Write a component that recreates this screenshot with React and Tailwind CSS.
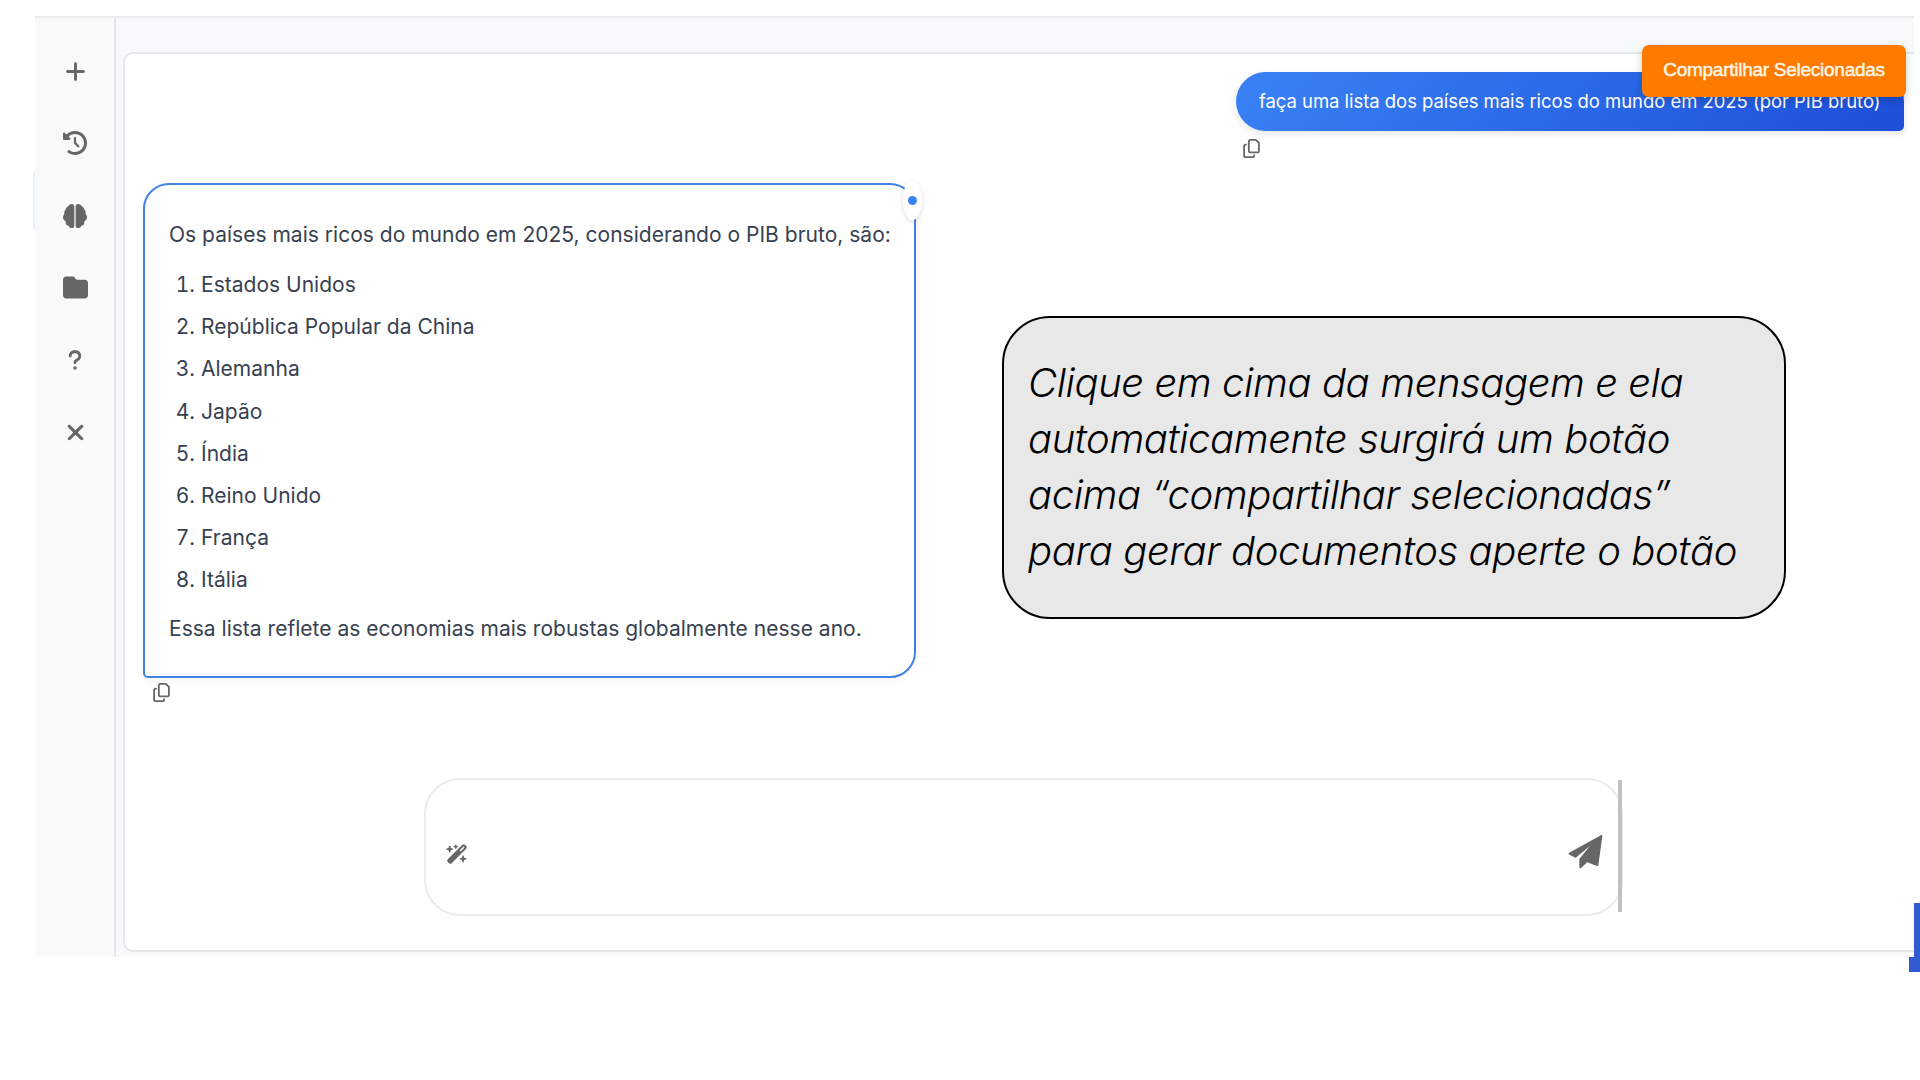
import React from "react";
import {
  FaPlus,
  FaClockRotateLeft,
  FaFolder,
  FaQuestion,
  FaXmark,
  FaRegCopy,
  FaWandMagicSparkles,
} from "react-icons/fa6";

const countries = [
  "Estados Unidos",
  "República Popular da China",
  "Alemanha",
  "Japão",
  "Índia",
  "Reino Unido",
  "França",
  "Itália",
];

const noteLines = [
  "Clique em cima da mensagem e ela",
  "automaticamente surgirá um botão",
  "acima “compartilhar selecionadas”",
  "para gerar documentos aperte o botão",
];

function BrainIcon() {
  return (
    <svg width="24" height="24" viewBox="0 0 72 72" fill="currentColor">
      <path d="M34 7v58c0 4-3 7-7 7-5 0-9-3-10-7-5 0-9-4-9-9v-4c-5-2-8-6-8-12 0-4 2-7 4-9-1-6 0-11 4-14 0-5 4-9 8-10 1-4 5-7 11-7 4 0 7 3 7 7z" />
      <path d="M38 7v58c0 4 3 7 7 7 5 0 9-3 10-7 5 0 9-4 9-9v-4c5-2 8-6 8-12 0-4-2-7-4-9 1-6 0-11-4-14 0-5-4-9-8-10-1-4-5-7-11-7-4 0-7 3-7 7z" />
    </svg>
  );
}

function SendIcon() {
  return (
    <svg className="-mt-[3px]" width="35" height="35" viewBox="0 0 105 105" fill="currentColor" stroke="currentColor" strokeWidth="6" strokeLinejoin="round">
      <path d="M100 6 L5 59 L22 68 L66 32 L70 36 L37 76 L37 100 L57 81 L88 93 Z" />
    </svg>
  );
}

function Sidebar() {
  return (
    <nav className="w-[81px] shrink-0 border-r-2 border-[#e5e7eb] bg-[#f9f9f9] text-[#666] flex flex-col items-center pt-[41px] pl-px gap-[48px]">
      <button className="h-6 flex items-center"><FaPlus size={23} /></button>
      <button className="h-6 flex items-center"><FaClockRotateLeft size={24} /></button>
      <button className="h-6 flex items-center pt-px"><BrainIcon /></button>
      <button className="h-6 flex items-center"><FaFolder size={25} /></button>
      <button className="h-6 flex items-center pt-[2px]"><FaQuestion size={22} /></button>
      <button className="h-6 flex items-center pt-[2px]"><FaXmark size={25} /></button>
    </nav>
  );
}

function UserMessage() {
  return (
    <div className="self-end w-[668px] mr-[10px]">
      <div className="h-[59px] rounded-[30px] rounded-br-[5px] bg-linear-135 from-[#3b82f6] to-[#1d4ed8] shadow-[0_3px_8px_rgba(0,0,0,0.1)] flex items-center pl-[23px] pt-px text-white text-[18.5px] tracking-[-0.045px] whitespace-nowrap">
        faça uma lista dos países mais ricos do mundo em 2025 (por PIB bruto)
      </div>
      <FaRegCopy size={19} className="mt-2 ml-[6px] text-[#666]" />
    </div>
  );
}

function AssistantMessage() {
  return (
    <div className="w-[773px] ml-[18px]">
      <div className="relative h-[495px] rounded-[26px] rounded-bl-[5px] border-2 border-[#4083e4] bg-white shadow-[0_3px_8px_rgba(0,0,0,0.05)] pl-6 pt-[33px] text-[21px] tracking-[0.015px] leading-[34px] text-[#374151] whitespace-nowrap">
        <p>Os países mais ricos do mundo em 2025, considerando o PIB bruto, são:</p>
        <ol className="mt-[12px] pl-[6px]">
          {countries.map((c, i) => (
            <li key={c} className="h-[42.2px] flex items-center">
              <span className="w-[26px] pr-[6px] text-right tabular-nums">{i + 1}.</span>
              {c}
            </li>
          ))}
        </ol>
        <p className="mt-[10px]">Essa lista reflete as economias mais robustas globalmente nesse ano.</p>
        <span className="absolute -top-[5px] -right-[8px] w-[19px] h-[40px] rounded-[50%] bg-white shadow-[0_2px_5px_rgba(0,0,0,0.14)] flex items-center justify-center">
          <span className="size-[9px] rounded-full bg-[#3b82f6]" />
        </span>
      </div>
      <FaRegCopy size={19} className="mt-[5px] ml-[9px] text-[#666]" />
    </div>
  );
}

function Composer() {
  return (
    <div className="relative w-[1199px] h-[138px] ml-[299px] rounded-[36px] border-2 border-[#ebebeb] bg-white text-[#666] flex items-center justify-between pl-5 pr-[18px] pt-[12px]">
      <FaWandMagicSparkles size={22} className="mt-px" />
      <SendIcon />
      <span className="absolute -right-px top-0 w-1 h-[132px] bg-[#c1c1c1]" />
    </div>
  );
}

function Note() {
  return (
    <aside className="absolute left-[1002px] top-[316px] w-[784px] h-[303px] rounded-[48px] border-2 border-black bg-[#e8e8e8] pl-6 pt-[37px] text-[40px] tracking-[-0.42px] leading-[56px] italic font-light text-black whitespace-nowrap">
      {noteLines.map((l) => (
        <p key={l}>{l}</p>
      ))}
    </aside>
  );
}

export default function App() {
  return (
    <div className="relative w-[1920px] h-[1080px] overflow-hidden bg-white pt-4 pl-[35px] font-['Inter',sans-serif]">
      <div className="w-[1879px] h-[941px] border-t-2 border-[#ececee] bg-[#f8f9fb] flex overflow-hidden">
        <Sidebar />
        <main className="ml-[7px] mt-[34px] h-[900px] flex-1 border-2 border-r-0 border-[#e5e7eb] rounded-l-[10px] bg-white flex flex-col pt-[18px]">
          <UserMessage />
          <div className="mt-[25px]"><AssistantMessage /></div>
          <div className="mt-[76px]"><Composer /></div>
        </main>
      </div>
      <button className="absolute left-[1642px] top-[45px] w-[264px] h-[52px] rounded-[7px] bg-[#ff7b00] text-[#fff3e6] text-[19px] tracking-[-0.26px] pb-px font-['Liberation_Sans',sans-serif] [-webkit-text-stroke:0.5px_#fff3e6] shadow-[0_3px_8px_rgba(0,0,0,0.2)] whitespace-nowrap">
        Compartilhar Selecionadas
      </button>
      <Note />
      <div className="absolute left-[33px] top-[172px] w-[2px] h-[58px] bg-[#e6f2fd]" />
      <div className="absolute right-0 top-[903px] flex flex-col items-end">
        <div className="w-[6px] h-[54px] bg-[#325bd2]" />
        <div className="w-[11px] h-[15px] bg-[#325bd2]" />
      </div>
    </div>
  );
}
